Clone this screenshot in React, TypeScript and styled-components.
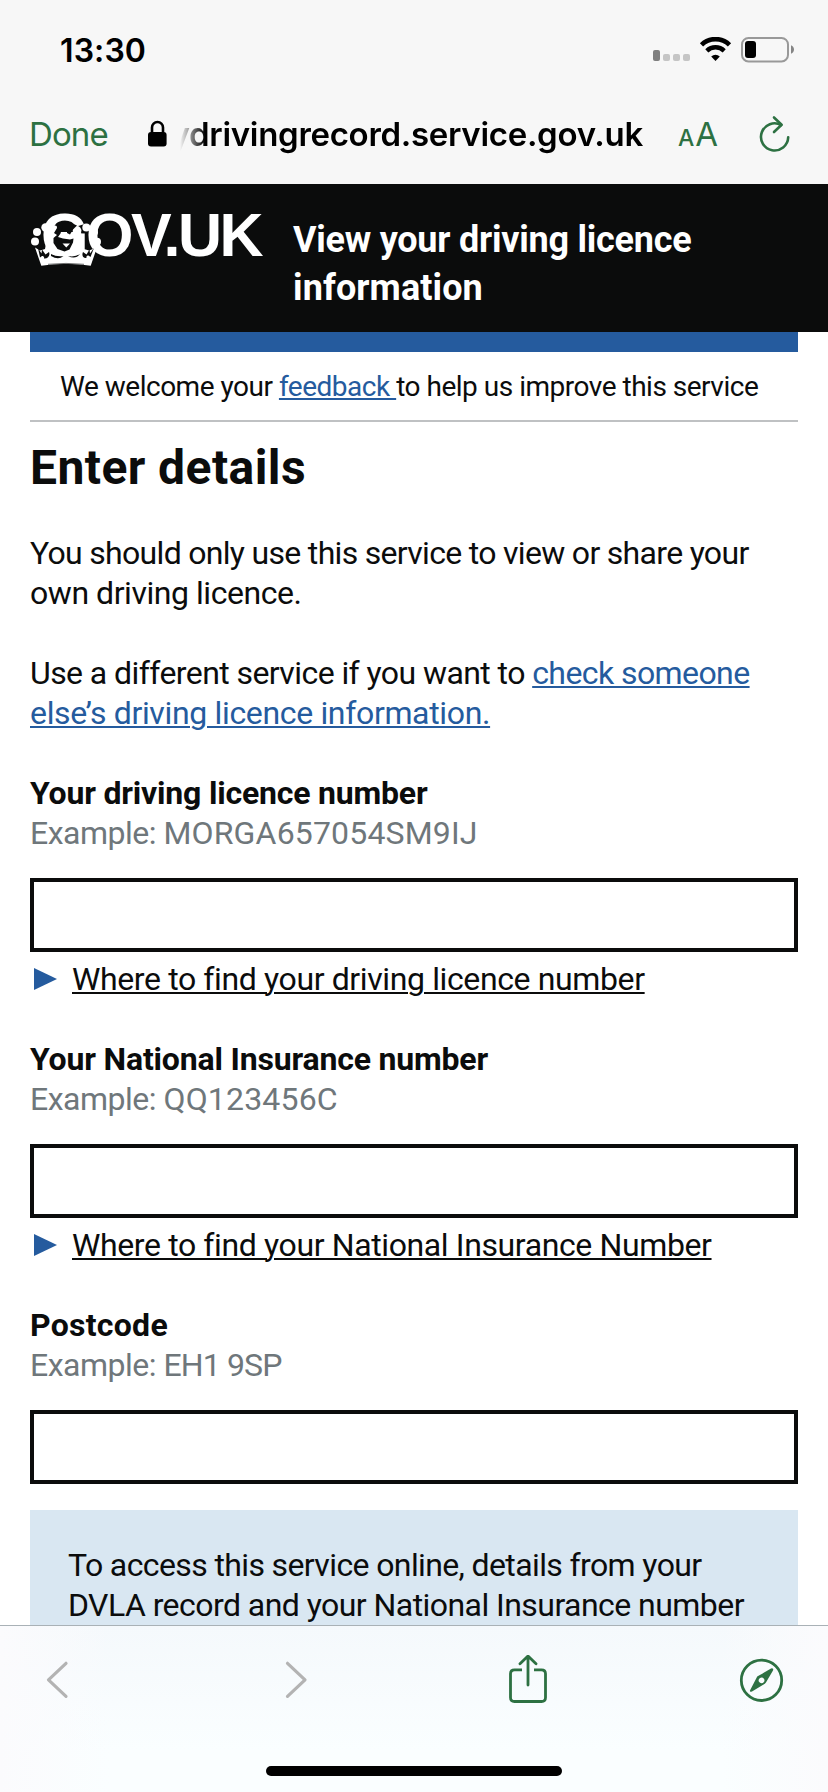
import React from "react";
import styled, { createGlobalStyle } from "styled-components";

const ink = "#0b0c0c";
const blue = "#255b9e";
const green = "#2d7142";
const bodyFont = `Roboto, "Open Sans", sans-serif`;
const systemFont = `Inter, Roboto, sans-serif`;

const GlobalStyle = createGlobalStyle`
  * { box-sizing: border-box; }
  html, body { margin: 0; padding: 0; background: #fff; }
`;

const Screen = styled.div`
  width: 828px;
  height: 1792px;
  display: flex;
  flex-direction: column;
  overflow: hidden;
  background: #fff;
  color: ${ink};
  font-family: ${bodyFont};
`;

const BrowserTop = styled.header`
  height: 184px;
  flex: none;
  background: #f7f7f7;
  color: #000;
  font-family: ${systemFont};
`;

const StatusBar = styled.div`
  height: 100px;
  padding: 0 33px 0 60px;
  display: flex;
  align-items: center;
  justify-content: space-between;
`;

const Clock = styled.span`
  padding-top: 1px;
  font-size: 32px;
  font-weight: 600;
  line-height: 40px;
  letter-spacing: 0.1px;
`;

const AddressBar = styled.div`
  height: 84px;
  padding: 13px 37px 0 29px;
  display: flex;
  align-items: flex-start;
  line-height: 42px;
`;

const Done = styled.button`
  width: 119px;
  padding: 0;
  border: 0;
  background: none;
  text-align: left;
  font: 400 33px/42px ${systemFont};
  letter-spacing: -0.9px;
  color: ${green};
`;

const LockIcon = styled.svg`
  flex: none;
  margin-top: 7px;
`;

const Address = styled.div`
  width: 477px;
  display: flex;
  justify-content: flex-end;
  white-space: nowrap;
  font-size: 33px;
  font-weight: 600;
  letter-spacing: -0.3px;
  mask-image: linear-gradient(to right, transparent 13px, #000 38px);
`;

const TextSize = styled.button`
  margin-left: 35px;
  width: 40px;
  padding: 0;
  border: 0;
  background: none;
  display: flex;
  align-items: baseline;
  gap: 1px;
  font: 400 33px/42px ${systemFont};
  color: ${green};
  small { font-size: 23px; font-weight: 500; }
`;

const ReloadIcon = styled.svg`
  flex: none;
  margin: 0 0 0 39px;
`;

const Masthead = styled.div`
  height: 148px;
  flex: none;
  background: ${ink};
  color: #fff;
  display: flex;
  padding: 21px 30px 0;
`;

const Logo = styled.div`
  width: 263px;
  height: 70px;
  position: relative;
  padding-left: 11px;
`;

const Wordmark = styled.span`
  font: 700 61px/60px "Liberation Sans", sans-serif;
  letter-spacing: -2.5px;
  white-space: nowrap;
`;

const Crown = styled.svg`
  position: absolute;
  left: 0;
  top: 11px;
`;

const ServiceName = styled.div`
  padding-top: 11px;
  font-size: 36px;
  line-height: 48px;
  font-weight: 700;
`;

const Line = styled.span<{ $ls?: number }>`
  display: block;
  white-space: nowrap;
  letter-spacing: ${(p) => p.$ls ?? 0}px;
`;

const Main = styled.main`
  flex: 1;
  min-height: 0;
  overflow: hidden;
  padding: 0 30px;
  display: flex;
  flex-direction: column;
`;

const BlueBar = styled.div`
  height: 20px;
  flex: none;
  background: ${blue};
`;

const Feedback = styled.div`
  height: 70px;
  flex: none;
  padding: 15px 30px 0;
  border-bottom: 2px solid #bfc1c3;
  font-size: 28px;
  line-height: 40px;
`;

const Link = styled.a`
  color: ${blue};
  text-decoration: underline;
  text-decoration-thickness: 2px;
  text-underline-offset: 2px;
`;

const Heading = styled.h1`
  margin: 16px 0 0;
  flex: none;
  font-size: 48px;
  line-height: 60px;
  font-weight: 700;
`;

const Paragraph = styled.p<{ $top: number }>`
  margin: ${(p) => p.$top}px 0 0;
  flex: none;
  font-size: 32px;
  line-height: 40px;
`;

const Field = styled.section`
  margin-top: 40px;
  flex: none;
  font-size: 32px;
  line-height: 40px;
`;

const Label = styled.label<{ $ls: number }>`
  display: block;
  font-weight: 700;
  letter-spacing: ${(p) => p.$ls}px;
`;

const Hint = styled.span`
  display: block;
  white-space: pre;
  letter-spacing: -0.5px;
  color: #6f777b;
`;

const Sample = styled.span<{ $ls: number }>`
  letter-spacing: ${(p) => p.$ls}px;
`;

const Input = styled.input`
  display: block;
  width: 100%;
  height: 74px;
  margin: 25px 0 0;
  padding: 8px;
  border: 4px solid ${ink};
  border-radius: 0;
  background: #fff;
`;

const Details = styled.div`
  height: 47px;
  padding: 7px 0 0 4px;
  display: flex;
  align-items: flex-start;
`;

const Triangle = styled.svg`
  flex: none;
  margin: 9px 15px 0 0;
`;

const Summary = styled.span`
  white-space: nowrap;
  letter-spacing: -0.38px;
  text-decoration: underline;
  text-decoration-thickness: 2px;
  text-underline-offset: 2px;
`;

const Notice = styled.div`
  margin-top: 26px;
  flex: none;
  height: 200px;
  padding: 35px 38px;
  background: #d9e7f2;
  font-size: 32px;
  line-height: 40px;
`;

const BottomBar = styled.footer`
  height: 167px;
  flex: none;
  border-top: 1px solid #a9b1b6;
  background: linear-gradient(to right, #fbfbfd 0, rgba(251, 251, 253, 0) 110px, rgba(251, 251, 253, 0) 720px, #fbfbfd 100%),
    linear-gradient(#f5f9fc, #fafeff 75%);
  display: flex;
  flex-direction: column;
  align-items: center;
`;

const Tools = styled.nav`
  width: 100%;
  height: 140px;
  padding: 29px 0 0 46px;
  display: flex;
  align-items: flex-start;
`;

const ToolIcon = styled.svg<{ $left?: number }>`
  flex: none;
  margin-left: ${(p) => p.$left ?? 0}px;
`;

const HomeIndicator = styled.div`
  width: 296px;
  height: 10px;
  border-radius: 5px;
  background: #000;
`;

function StatusIcons() {
  return (
    <svg width="142" height="26" viewBox="653 37 142 26" fill="none">
      <rect x="653" y="50" width="7" height="11" rx="2" fill="#7f7f7f" />
      <rect x="663" y="54" width="7" height="7" rx="2" fill="#c5c5c5" />
      <rect x="673" y="54" width="7" height="7" rx="2" fill="#c5c5c5" />
      <rect x="683" y="54" width="7" height="7" rx="2" fill="#c5c5c5" />
      <path d="M701.5 44.8a20 20 0 0 1 28 0" stroke="#000" strokeWidth="4.6" />
      <path d="M706.8 50.8a12.500 12.500 0 0 1 17.4 0" stroke="#000" strokeWidth="4.4" />
      <path d="M711.2 56.4a6.4 6.4 0 0 1 8.600 0L715.5 61z" fill="#000" />
      <rect x="742" y="38" width="46" height="23.4" rx="6.5" stroke="#999" strokeWidth="2" />
      <rect x="745" y="41" width="11" height="17" rx="3" fill="#000" />
      <path d="M791 45.3c4 1.500 4 7 0 8.500z" fill="#858585" />
    </svg>
  );
}

function CrownMark() {
  return (
    <Crown width="74" height="52" viewBox="30 216 74 52">
      <g fill="#fff">
        <circle cx="37" cy="232" r="4" />
        <circle cx="35" cy="241.500" r="4" />
        <circle cx="45.500" cy="227.500" r="4.200" />
        <circle cx="54.500" cy="230" r="4.400" />
        <circle cx="77" cy="230.500" r="4.400" />
        <circle cx="86.300" cy="227.500" r="4" />
        <circle cx="94" cy="232.300" r="4" />
        <circle cx="97" cy="241.700" r="4" />
        <path d="M35 247.500l5 3 5-1.500 3-17h33l3 17 5 1.500 8-3-6.300 18.300q-24.700-4-49.400 0z" />
      </g>
      <path
        fill={ink}
        d="M56.500 223.500l4-1.500 3 1.500-3 10-2.500 3.500 5 1.500 7 1 3.500-1-.5 4-3.500 7-5 2-7-2.500-4-6v-5l3.500-3-3-2 3-5z"
      />
      <path fill={ink} d="M67 222l4 1 6 2.500-4 4-3 5-3-1.500z" />
      <path fill="#fff" d="M62.500 243.500h7.500l-3.700 4z" />
      <g fill={ink}>
        <path d="M38 248l3.500 5.500.5-4 3.500 5 3.500-2.500c1.500 4-1.500 7-5 6.500 .5-1.500-.5-2.500-2-2.500l-2 1.500z" />
        <path d="M51 254q5.500 3 12.500 2-5 4.500-12.500 0z" />
        <path d="M68 256q6.500 1.500 12-2-4.500 6-12 2z" />
        <path d="M83 252l3.500 2.500 3-5 .5 4 4-5.500-3.500 9-2-1.500c-1.500 0-2.500 1-2 2.500-3.500.5-5-2.500-3.500-6z" />
      </g>
      <path d="M48 264.300q18-1.800 36 0" stroke="#6d6e6e" fill="none" />
    </Crown>
  );
}

interface FieldProps {
  label: string;
  sample: string;
  labelSpacing: number;
  sampleSpacing: number;
  help?: string;
}

function FormField({ label, sample, labelSpacing, sampleSpacing, help }: FieldProps) {
  return (
    <Field>
      <Label $ls={labelSpacing}>{label}</Label>
      <Hint>
        Example: <Sample $ls={sampleSpacing}>{sample}</Sample>
      </Hint>
      <Input aria-label={label} />
      {help && (
        <Details>
          <Triangle width="23" height="22" viewBox="0 0 23 22">
            <path d="M0 0l23 11L0 22z" fill={blue} />
          </Triangle>
          <Summary>{help}</Summary>
        </Details>
      )}
    </Field>
  );
}

export default function App() {
  return (
    <Screen>
      <GlobalStyle />
      <BrowserTop>
        <StatusBar>
          <Clock>13:30</Clock>
          <StatusIcons />
        </StatusBar>
        <AddressBar>
          <Done>Done</Done>
          <LockIcon width="19" height="28" viewBox="0 0 19 28">
            <path d="M4 13V7.500a5.500 5.500 0 0 1 11 0V13" fill="none" stroke="#000" strokeWidth="2.600" />
            <rect x="0" y="12" width="18.600" height="14.500" rx="3" />
          </LockIcon>
          <Address>ydrivingrecord.service.gov.uk</Address>
          <TextSize>
            <small>A</small>A
          </TextSize>
          <ReloadIcon width="34" height="42" viewBox="757 113 34 42" fill="none" stroke={green} strokeWidth="2.600" strokeLinecap="round" strokeLinejoin="round">
            <path d="M788.200 137.300a13.600 13.600 0 1 1-7-12.300" />
            <path d="M774 117.500l7.600 7.200-7.600 7.300" />
          </ReloadIcon>
        </AddressBar>
      </BrowserTop>

      <Masthead>
        <Logo>
          <Wordmark>GOV.UK</Wordmark>
          <CrownMark />
        </Logo>
        <ServiceName>
          <Line $ls={-0.24}>View your driving licence</Line>
          <Line $ls={0.1}>information</Line>
        </ServiceName>
      </Masthead>

      <Main>
        <BlueBar />
        <Feedback>
          <Line $ls={-0.49}>
            We welcome your <Link>feedback </Link>to help us improve this service
          </Line>
        </Feedback>
        <Heading>
          <Line $ls={0.42}>Enter details</Line>
        </Heading>
        <Paragraph $top={35}>
          <Line $ls={-0.69}>You should only use this service to view or share your</Line>
          <Line $ls={-0.45}>own driving licence.</Line>
        </Paragraph>
        <Paragraph $top={40}>
          <Line $ls={-0.58}>
            Use a different service if you want to <Link>check someone</Link>
          </Line>
          <Line $ls={-0.34}>
            <Link>else’s driving licence information.</Link>
          </Line>
        </Paragraph>
        <FormField
          label="Your driving licence number"
          sample="MORGA657054SM9IJ"
          labelSpacing={-0.2}
          sampleSpacing={0.17}
          help="Where to find your driving licence number"
        />
        <FormField
          label="Your National Insurance number"
          sample="QQ123456C"
          labelSpacing={-0.18}
          sampleSpacing={0.18}
          help="Where to find your National Insurance Number"
        />
        <FormField label="Postcode" sample="EH1 9SP" labelSpacing={0.27} sampleSpacing={-0.85} />
        <Notice>
          <Line $ls={-0.62}>To access this service online, details from your</Line>
          <Line $ls={-0.55}>DVLA record and your National Insurance number</Line>
        </Notice>
      </Main>

      <BottomBar>
        <Tools>
          <ToolIcon width="24" height="48" viewBox="46 1655 24 48" fill="none" stroke="#b3b3b3" strokeWidth="3.200" strokeLinecap="round" strokeLinejoin="round">
            <path d="M66 1663.300l-17.500 16.500 17.500 16.500" />
          </ToolIcon>
          <ToolIcon $left={214} width="24" height="48" viewBox="284 1655 24 48" fill="none" stroke="#b3b3b3" strokeWidth="3.200" strokeLinecap="round" strokeLinejoin="round">
            <path d="M287.500 1663.300l17.500 16.500-17.500 16.500" />
          </ToolIcon>
          <ToolIcon $left={200} width="40" height="49" viewBox="508 1655 40 49" fill="none" stroke={green} strokeWidth="2.800" strokeLinecap="round" strokeLinejoin="round">
            <path d="M522 1669.800h-7.500q-4 0-4 4v23.700q0 4 4 4h27q4 0 4-4v-23.700q0-4-4-4H534" strokeLinecap="butt" />
            <path d="M528 1685v-28m-8 6.800l8-7.800 8 7.800" />
          </ToolIcon>
          <ToolIcon $left={191} width="45" height="49" viewBox="739 1655 45 49">
            <circle cx="761.500" cy="1680.300" r="20.200" fill="none" stroke={green} strokeWidth="2.800" />
            <path d="M773 1668.800q.600.600-.300 2.200l-6.600 11.300q-.500.900-1.300 1.400l-12.800 7.800q-2.800 1-1.900-1.300l6.600-12.700q.500-.900 1.300-1.400l13-7.500q1.400-.600 2 .2zM761.500 1677.500a2.900 2.900 0 1 0 .1 0z" fill={green} fillRule="evenodd" />
          </ToolIcon>
        </Tools>
        <HomeIndicator />
      </BottomBar>
    </Screen>
  );
}
